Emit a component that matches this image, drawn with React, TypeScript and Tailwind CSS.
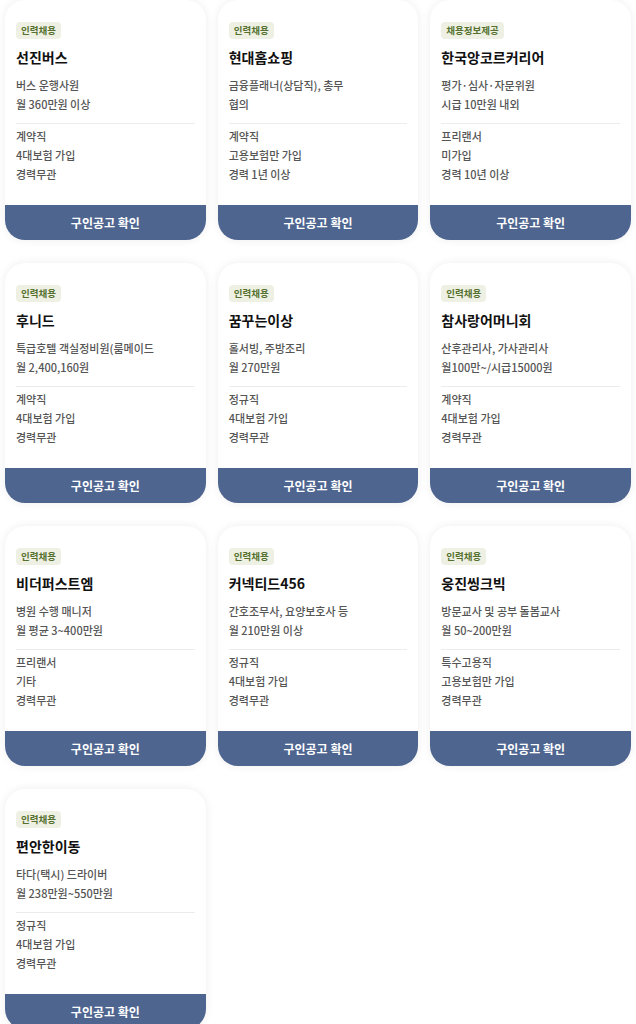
type Job = {
  tag: string;
  company: string;
  role: string;
  pay: string;
  type: string;
  insurance: string;
  career: string;
};

const jobs: Job[] = [
  { tag: '인력채용', company: '선진버스', role: '버스 운행사원', pay: '월 360만원 이상', type: '계약직', insurance: '4대보험 가입', career: '경력무관' },
  { tag: '인력채용', company: '현대홈쇼핑', role: '금융플래너(상담직), 총무', pay: '협의', type: '계약직', insurance: '고용보험만 가입', career: '경력 1년 이상' },
  { tag: '채용정보제공', company: '한국앙코르커리어', role: '평가·심사·자문위원', pay: '시급 10만원 내외', type: '프리랜서', insurance: '미가입', career: '경력 10년 이상' },
  { tag: '인력채용', company: '후니드', role: '특급호텔 객실정비원(룸메이드', pay: '월 2,400,160원', type: '계약직', insurance: '4대보험 가입', career: '경력무관' },
  { tag: '인력채용', company: '꿈꾸는이상', role: '홀서빙, 주방조리', pay: '월 270만원', type: '정규직', insurance: '4대보험 가입', career: '경력무관' },
  { tag: '인력채용', company: '참사랑어머니회', role: '산후관리사, 가사관리사', pay: '월100만~/시급15000원', type: '계약직', insurance: '4대보험 가입', career: '경력무관' },
  { tag: '인력채용', company: '비더퍼스트엠', role: '병원 수행 매니저', pay: '월 평균 3~400만원', type: '프리랜서', insurance: '기타', career: '경력무관' },
  { tag: '인력채용', company: '커넥티드456', role: '간호조무사, 요양보호사 등', pay: '월 210만원 이상', type: '정규직', insurance: '4대보험 가입', career: '경력무관' },
  { tag: '인력채용', company: '웅진씽크빅', role: '방문교사 및 공부 돌봄교사', pay: '월 50~200만원', type: '특수고용직', insurance: '고용보험만 가입', career: '경력무관' },
  { tag: '인력채용', company: '편안한이동', role: '타다(택시) 드라이버', pay: '월 238만원~550만원', type: '정규직', insurance: '4대보험 가입', career: '경력무관' },
];

function JobCard({ job }: { job: Job }) {
  return (
    <div className="flex h-[240px] flex-col overflow-hidden rounded-[20px] bg-white shadow-[0_0_10px_rgba(0,0,0,0.07)]">
      <div className="flex-1 px-[11px] pt-[22px]">
        <span className="flex h-[17px] w-fit items-center rounded-[4px] bg-[#eef0e3] px-[5px] text-[9.5px] font-semibold leading-none text-[#55702f]">
          {job.tag}
        </span>
        <h3 className="mt-[8px] text-[14px] font-bold leading-[20px] text-[#111]">{job.company}</h3>
        <div className="mt-[9px] text-[11px] font-medium leading-[19px] text-[#555]">
          <p className="whitespace-nowrap">{job.role}</p>
          <p className="whitespace-nowrap">{job.pay}</p>
        </div>
        <div className="mt-[9px] border-t border-[#ececec]" />
        <div className="mt-[3px] text-[11px] font-medium leading-[19px] text-[#555]">
          <p>{job.type}</p>
          <p>{job.insurance}</p>
          <p>{job.career}</p>
        </div>
      </div>
      <button
        type="button"
        className="h-[35px] w-full shrink-0 bg-[#4e6590] text-[12px] font-bold text-white"
      >
        구인공고 확인
      </button>
    </div>
  );
}

export default function App() {
  return (
    <div
      className="min-h-screen bg-white px-[5px] pb-6"
      style={{ fontFamily: '"Noto Sans CJK KR", "Noto Sans", sans-serif' }}
    >
      <div className="grid grid-cols-3 gap-x-[12px] gap-y-[23px]">
        {jobs.map((job) => (
          <JobCard key={job.company} job={job} />
        ))}
      </div>
    </div>
  );
}
